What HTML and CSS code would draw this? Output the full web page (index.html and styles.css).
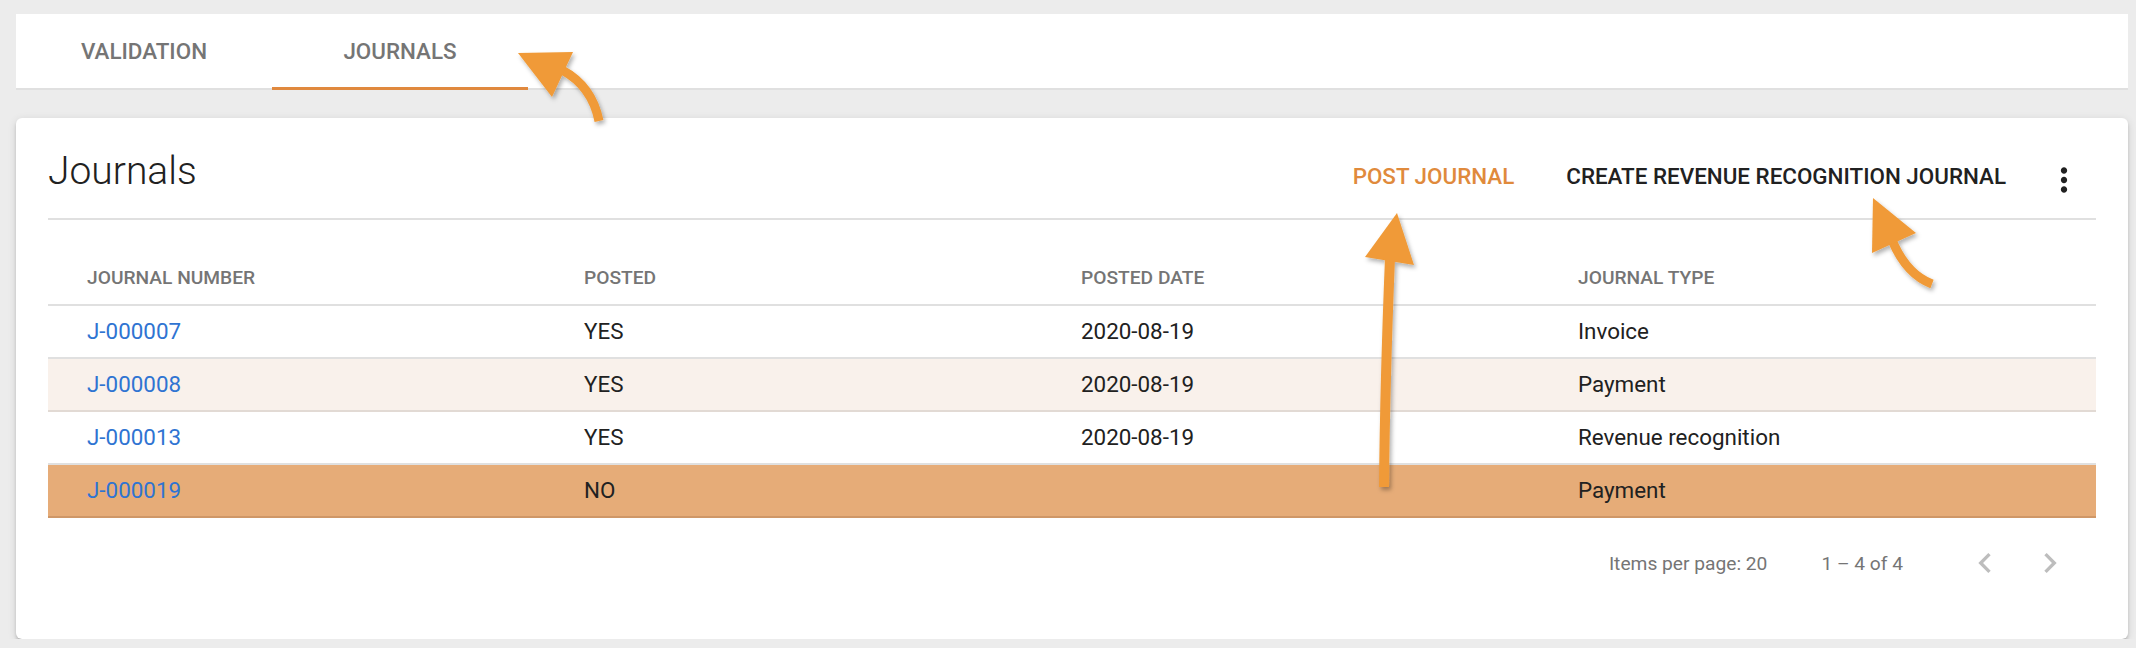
FILE: index.html
```html
<!DOCTYPE html>
<html lang="en">
<head>
  <meta charset="UTF-8">
  <meta name="viewport" content="width=device-width, initial-scale=1.0">
  <title>Journals</title>
  <link rel="stylesheet" href="styles.css">
</head>
<body>
  <nav class="tabs">
    <div class="tab">VALIDATION</div>
    <div class="tab active">JOURNALS</div>
  </nav>

  <div class="card">
    <div class="card-header">
      <h1 class="title">Journals</h1>
      <div class="actions">
        <button class="btn btn-accent">POST JOURNAL</button>
        <button class="btn">CREATE REVENUE RECOGNITION JOURNAL</button>
        <button class="icon-btn menu-btn" aria-label="More">
          <svg viewBox="0 0 24 24" width="38" height="38"><path fill="#212121" d="M12 8c1.1 0 2-.9 2-2s-.9-2-2-2-2 .9-2 2 .9 2 2 2zm0 2c-1.1 0-2 .9-2 2s.9 2 2 2 2-.9 2-2-.9-2-2-2zm0 6c-1.1 0-2 .9-2 2s.9 2 2 2 2-.9 2-2-.9-2-2-2z"/></svg>
        </button>
      </div>
    </div>

    <div class="table">
      <div class="row head">
        <div>JOURNAL NUMBER</div>
        <div>POSTED</div>
        <div>POSTED DATE</div>
        <div>JOURNAL TYPE</div>
      </div>
      <div class="row">
        <div><a href="#">J-000007</a></div>
        <div>YES</div>
        <div>2020-08-19</div>
        <div>Invoice</div>
      </div>
      <div class="row hover">
        <div><a href="#">J-000008</a></div>
        <div>YES</div>
        <div>2020-08-19</div>
        <div>Payment</div>
      </div>
      <div class="row">
        <div><a href="#">J-000013</a></div>
        <div>YES</div>
        <div>2020-08-19</div>
        <div>Revenue recognition</div>
      </div>
      <div class="row selected">
        <div><a href="#">J-000019</a></div>
        <div>NO</div>
        <div></div>
        <div>Payment</div>
      </div>
    </div>

    <div class="paginator">
      <span class="page-size">Items per page: 20</span>
      <span class="range">1 – 4 of 4</span>
      <button class="icon-btn" aria-label="Previous page">
        <svg viewBox="0 0 24 24" width="40" height="40"><path fill="#bdbdbd" d="M15.41 7.41L14 6l-6 6 6 6 1.41-1.41L10.83 12z"/></svg>
      </button>
      <button class="icon-btn" aria-label="Next page">
        <svg viewBox="0 0 24 24" width="40" height="40"><path fill="#bdbdbd" d="M10 6L8.59 7.41 13.17 12l-4.58 4.59L10 18l6-6z"/></svg>
      </button>
    </div>
  </div>

  <!-- annotation arrows drawn over the screenshot -->
  <svg class="arrows" width="2136" height="648" viewBox="0 0 2136 648">
    <defs>
      <filter id="shadow" x="-20%" y="-20%" width="140%" height="140%">
        <feDropShadow dx="2" dy="3" stdDeviation="2" flood-color="#000" flood-opacity="0.3"/>
      </filter>
    </defs>
    <g fill="#f09a37" stroke="#f09a37" filter="url(#shadow)">
      <path d="M562 70 Q592 86 599 121" fill="none" stroke-width="9"/>
      <polygon points="518,53 573,52 552,97" stroke="none"/>

      <path d="M1390 258 Q1385 380 1384 487" fill="none" stroke-width="10"/>
      <polygon points="1397,213 1365,257 1414,265" stroke="none"/>

      <path d="M1892 240 Q1906 274 1932 284" fill="none" stroke-width="9"/>
      <polygon points="1873,198 1872,253 1916,233" stroke="none"/>
    </g>
  </svg>
</body>
</html>
```

FILE: styles.css
```css
body {
  margin: 0;
  padding: 14px 8px 0 16px;
  background-color: #ececec;
  font-family: Roboto, "Noto Sans", Arial, sans-serif;
  color: #212121;
}

.tabs {
  display: flex;
  background-color: #fff;
  border-bottom: 2px solid #e0e0e0;
  height: 74px;
}

.tab {
  width: 256px;
  height: 74px;
  line-height: 74px;
  text-align: center;
  font-size: 22.4px;
  font-weight: 500;
  color: #757575;
  box-sizing: border-box;
}

.tab.active {
  border-bottom: 3px solid #e0893e;
  height: 76px;
  line-height: 74px;
  margin-bottom: -2px;
}

.card {
  margin-top: 28px;
  background-color: #fff;
  border-radius: 6px;
  padding: 29px 32px 31px;
  box-shadow: 0 4px 2px -3px rgba(0, 0, 0, 0.2), 0 3px 3px 0 rgba(0, 0, 0, 0.14), 0 2px 8px 0 rgba(0, 0, 0, 0.12);
}

.card-header {
  display: flex;
  align-items: flex-start;
  justify-content: space-between;
  height: 71px;
  border-bottom: 2px solid #e0e0e0;
}

.title {
  margin: 0;
  font-size: 39px;
  font-weight: 300;
  line-height: 48px;
  color: #212121;
}

.actions {
  display: flex;
  align-items: flex-start;
}

.btn {
  font-family: inherit;
  font-size: 22.4px;
  font-weight: 500;
  height: 58px;
  line-height: 58px;
  padding: 0 26px;
  background: none;
  border: none;
  color: #212121;
  cursor: pointer;
}

.btn-accent {
  color: #e08a3c;
}

.icon-btn {
  width: 64px;
  height: 64px;
  padding: 0;
  border: none;
  background: none;
  display: flex;
  align-items: center;
  justify-content: center;
  cursor: pointer;
}

.menu-btn {
  margin-top: 1px;
}

.row {
  display: grid;
  grid-template-columns: repeat(4, 1fr);
  padding: 0 21px 0 39px;
  height: 51px;
  line-height: 51px;
  font-size: 22.4px;
  border-bottom: 2px solid #e0e0e0;
}

.row.head {
  height: 52px;
  line-height: 52px;
  padding-top: 32px;
  font-size: 19.2px;
  font-weight: 500;
  color: #757575;
}

.row a {
  color: #2f74d2;
  text-decoration: none;
}

.row.hover {
  background-color: #f9f1eb;
  border-bottom-color: #e2dad4;
}

.row.selected {
  background-color: #e6ac78;
  border-bottom-color: #cf9767;
}

.paginator {
  display: flex;
  align-items: center;
  justify-content: flex-end;
  height: 90px;
  padding-right: 14px;
  font-size: 19.2px;
  color: #757575;
}

.range {
  margin-left: 54px;
  margin-right: 50px;
}

.paginator .icon-btn + .icon-btn {
  margin-left: 1px;
}

.arrows {
  position: absolute;
  top: 0;
  left: 0;
  pointer-events: none;
}
```
